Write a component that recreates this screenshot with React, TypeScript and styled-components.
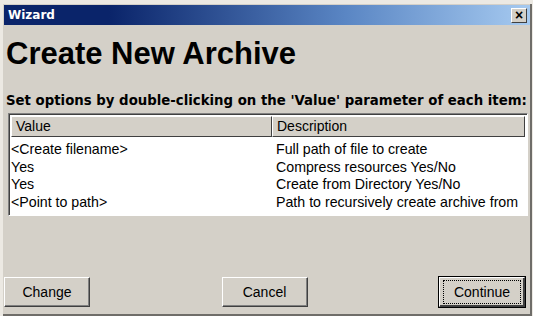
import React from "react";
import styled, { createGlobalStyle } from "styled-components";

const GlobalStyle = createGlobalStyle`
  html, body {
    margin: 0;
    padding: 0;
    background: #ece9e3;
  }
  body {
    font-family: "Liberation Sans", Arial, sans-serif;
  }
`;

const Window = styled.div`
  width: 529px;
  height: 312px;
  margin: 4px 0 0 3px;
  box-sizing: border-box;
  background: #d4d0c8;
  border-right: 2px solid #6f6d69;
  border-bottom: 2px solid #6f6d69;
  display: flex;
  flex-direction: column;
`;

const TitleBar = styled.div`
  height: 20px;
  margin: 1px 0 0 1px;
  padding: 0 3px 0 4px;
  display: flex;
  align-items: center;
  justify-content: space-between;
  background: linear-gradient(to right, #0a246a, #0a246a 20%, #5a86c4 65%, #a6caf0);
  color: #fff;
  font-family: "DejaVu Sans", Verdana, sans-serif;
  font-weight: bold;
  font-size: 12px;
`;

const CloseButton = styled.div`
  width: 14px;
  height: 13px;
  background: #d4d0c8;
  border: 1px solid;
  border-color: #fff #404040 #404040 #fff;
  color: #000;
  font-family: "Liberation Sans", Arial, sans-serif;
  font-size: 14px;
  line-height: 13px;
  text-align: center;
  font-weight: bold;
`;

const Heading = styled.h1`
  margin: 11px 0 0 3px;
  font-size: 31px;
  font-weight: bold;
  line-height: 36px;
  color: #000;
`;

const Hint = styled.div`
  margin: 21px 0 0 3px;
  font-family: "DejaVu Sans", Verdana, sans-serif;
  font-size: 13.3px;
  line-height: 16px;
  font-weight: bold;
  color: #000;
  white-space: nowrap;
`;

const ListBox = styled.div`
  margin: 4px 2px 0 5px;
  height: 101px;
  background: #fff;
  border: 1px solid;
  border-color: #808080 #fff #fff #808080;
  box-shadow: inset 1px 1px 0 #404040;
`;

const HeaderRow = styled.div`
  display: grid;
  grid-template-columns: 261px 1fr;
  margin: 2px 2px 4px 2px;
`;

const HeaderCell = styled.div`
  height: 19px;
  padding-left: 4px;
  background: #d4d0c8;
  border: 1px solid;
  border-color: #fff #404040 #404040 #fff;
  font-size: 14px;
  line-height: 19px;
  color: #000;
`;

const Row = styled.div`
  display: grid;
  grid-template-columns: 265px 1fr;
  padding-left: 2px;
  height: 17.5px;
  font-size: 14.2px;
  line-height: 17px;
  color: #000;
`;

const Cell = styled.div`
  white-space: nowrap;
`;

const Buttons = styled.div`
  margin-top: auto;
  margin-bottom: 7px;
  padding: 0 5px 0 1px;
  display: flex;
  justify-content: space-between;
`;

const Button = styled.div<{ $default?: boolean }>`
  width: 86px;
  height: 30px;
  box-sizing: border-box;
  display: flex;
  align-items: center;
  justify-content: center;
  background: #d4d0c8;
  font-size: 14px;
  color: #000;
  border: 1px solid;
  border-color: #fff #404040 #404040 #fff;
  box-shadow: inset -1px -1px 0 #808080;
  ${({ $default }) =>
    $default &&
    `
    outline: 1px solid #000;
    box-shadow: inset -1px -1px 0 #404040;
  `}
`;

const Focus = styled.span`
  padding: 3px 10px;
  border: 1px dotted #000;
`;

const rows = [
  ["<Create filename>", "Full path of file to create"],
  ["Yes", "Compress resources Yes/No"],
  ["Yes", "Create from Directory Yes/No"],
  ["<Point to path>", "Path to recursively create archive from"],
];

export default function App() {
  return (
    <>
      <GlobalStyle />
      <Window>
        <TitleBar>
          <span>Wizard</span>
          <CloseButton>×</CloseButton>
        </TitleBar>
        <Heading>Create New Archive</Heading>
        <Hint>
          Set options by double-clicking on the 'Value' parameter of each item:
        </Hint>
        <ListBox>
          <HeaderRow>
            <HeaderCell>Value</HeaderCell>
            <HeaderCell>Description</HeaderCell>
          </HeaderRow>
          {rows.map(([value, desc]) => (
            <Row key={desc}>
              <Cell>{value}</Cell>
              <Cell>{desc}</Cell>
            </Row>
          ))}
        </ListBox>
        <Buttons>
          <Button>Change</Button>
          <Button>Cancel</Button>
          <Button $default>
            <Focus>Continue</Focus>
          </Button>
        </Buttons>
      </Window>
    </>
  );
}
